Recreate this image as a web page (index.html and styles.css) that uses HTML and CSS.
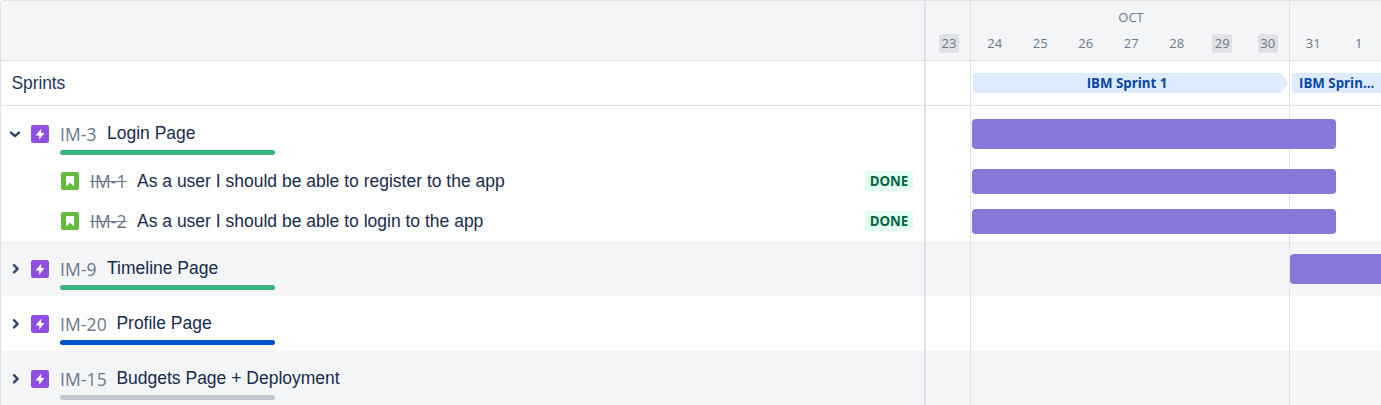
FILE: index.html
```html
<!DOCTYPE html>
<html lang="en">
<head>
<meta charset="utf-8">
<title>Roadmap</title>
<link rel="stylesheet" href="styles.css">
</head>
<body>
<svg class="defs" aria-hidden="true">
  <symbol id="epic" viewBox="0 0 18 18"><rect width="18" height="18" rx="2" fill="#904ee2"/><path d="M10.2 3.8v4.3h3.2L8.2 14.8v-4.4H4.6z" fill="#fff"/></symbol>
  <symbol id="story" viewBox="0 0 18 18"><rect width="18" height="18" rx="2" fill="#63ba3c"/><path d="M5.8 4h6.4a.8.8 0 0 1 .8.8v9.6L9 10.7 5 14.4V4.8a.8.8 0 0 1 .8-.8z" fill="#fff"/></symbol>
  <symbol id="right" viewBox="0 0 12 12"><path d="M5 2.2 8.6 5.8 5 9.4" fill="none" stroke="#344563" stroke-width="2.4" stroke-linecap="round" stroke-linejoin="round"/></symbol>
  <symbol id="down" viewBox="0 0 12 12"><path d="M2 4.6 6 8 10 4.6" fill="none" stroke="#344563" stroke-width="2.4" stroke-linecap="round" stroke-linejoin="round"/></symbol>
</svg>
<main class="roadmap">
  <section class="list">
    <div class="list-head"></div>
    <div class="sprints-label"><span>Sprints</span></div>
    <div class="row epic">
      <svg class="chevron"><use href="#down"/></svg><svg class="type"><use href="#epic"/></svg>
      <div class="summary"><div class="line"><span class="key">IM-3</span><span class="title">Login Page</span></div><div class="progress done"></div></div>
    </div>
    <div class="row child">
      <svg class="type"><use href="#story"/></svg><span class="key"><span class="struck">IM-1</span></span><span class="title">As a user I should be able to register to the app</span><span class="status">DONE</span>
    </div>
    <div class="row child">
      <svg class="type"><use href="#story"/></svg><span class="key"><span class="struck">IM-2</span></span><span class="title">As a user I should be able to login to the app</span><span class="status">DONE</span>
    </div>
    <div class="row epic shaded">
      <svg class="chevron"><use href="#right"/></svg><svg class="type"><use href="#epic"/></svg>
      <div class="summary"><div class="line"><span class="key">IM-9</span><span class="title">Timeline Page</span></div><div class="progress done"></div></div>
    </div>
    <div class="row epic">
      <svg class="chevron"><use href="#right"/></svg><svg class="type"><use href="#epic"/></svg>
      <div class="summary"><div class="line"><span class="key long">IM-20</span><span class="title">Profile Page</span></div><div class="progress active"></div></div>
    </div>
    <div class="row epic shaded">
      <svg class="chevron"><use href="#right"/></svg><svg class="type"><use href="#epic"/></svg>
      <div class="summary"><div class="line"><span class="key long">IM-15</span><span class="title">Budgets Page + Deployment</span></div><div class="progress todo"></div></div>
    </div>
  </section>
  <section class="timeline">
    <div class="time-head">
      <div class="month">OCT</div>
      <div class="days">
        <div class="day first"><span class="off">23</span></div>
        <div class="day"><span>24</span></div>
        <div class="day"><span>25</span></div>
        <div class="day"><span>26</span></div>
        <div class="day"><span>27</span></div>
        <div class="day"><span>28</span></div>
        <div class="day"><span class="off">29</span></div>
        <div class="day"><span class="off">30</span></div>
        <div class="day"><span>31</span></div>
        <div class="day"><span>1</span></div>
      </div>
    </div>
    <div class="sprint-track">
      <div class="sprint">IBM Sprint 1</div>
      <svg class="tip" viewBox="0 0 7 20"><path d="M.5 0 7 10 .5 20z" fill="#deebff"/></svg>
      <div class="sprint next">IBM Sprin...</div>
    </div>
    <div class="track epic"><div class="bar"></div></div>
    <div class="track child"><div class="bar"></div></div>
    <div class="track child"><div class="bar"></div></div>
    <div class="track epic shaded"><div class="bar later"></div></div>
    <div class="track epic"></div>
    <div class="track epic shaded"></div>
    <div class="gridline week-one"></div>
    <div class="gridline week-two"></div>
  </section>
</main>
</body>
</html>
```
FILE: styles.css
```css
* { box-sizing: border-box; }
body { margin: 0; background: #fff; overflow: hidden; font-family: "Open Sans", "Noto Sans", sans-serif; }
.defs { position: absolute; width: 0; height: 0; }
.roadmap { display: flex; width: 1381px; height: 405px; overflow: hidden; border: solid #dfe1e6; border-width: 1px 0 0 1px; border-top-left-radius: 4px; }
.list { width: 925px; flex: none; border-right: 2px solid #dfe1e6; }
.list-head, .time-head { height: 60px; background: #f4f5f7; border-bottom: 1px solid #dfe1e6; }
.sprints-label, .sprint-track { height: 45px; display: flex; align-items: center; border-bottom: 1px solid #dfe1e6; }
.sprints-label { padding-left: 10.5px; font: 17.5px/24px "Liberation Sans", sans-serif; letter-spacing: -0.1px; color: #253858; }
.row { display: flex; }
.epic { height: 55px; }
.child { height: 40px; }
.shaded { background: #f4f5f7; }
.row.epic { padding: 13px 0 0 8px; }
.row.child { padding: 0 11px 0 60px; align-items: center; }
.chevron { width: 12px; height: 12px; margin: 9px 10px 0 0; flex: none; }
.type { width: 18px; height: 18px; flex: none; }
.epic .type { margin-top: 6px; }
.summary { margin-left: 11px; }
.line { display: flex; height: 31px; }
.key { width: 47px; font-size: 17.5px; line-height: 30px; letter-spacing: 0.1px; color: #6b778c; white-space: nowrap; }
.key.long { width: 56.4px; }
.child .key { margin-left: 11px; }
.struck { text-decoration: line-through; }
.title { font: 17.5px/28px "Liberation Sans", sans-serif; color: #172b4d; white-space: nowrap; }
.progress { width: 215px; height: 5px; border-radius: 3px; }
.done { background: #36b37e; }
.active { background: #0052cc; }
.todo { background: #c1c7d0; }
.status { margin-left: auto; width: 48px; height: 20px; border-radius: 3px; background: #e3fcef; color: #006644; font: 700 13.3px/20px "Open Sans", sans-serif; letter-spacing: -0.1px; text-align: center; }
.timeline { position: relative; width: 455px; flex: none; overflow: hidden; }
.time-head { padding-top: 7px; color: #6b778c; font-size: 13px; }
.month { width: 410px; text-align: center; line-height: 18px; height: 26px; }
.days { display: flex; }
.day { flex: none; width: 45.5px; display: flex; justify-content: center; line-height: 19px; }
.day.first { width: 46px; }
.off { width: 20px; border-radius: 3px; background: #dfe1e6; text-align: center; }
.sprint { flex: none; width: 308px; height: 20px; margin-left: 47px; border-radius: 3px 0 0 3px; background: #deebff; color: #0747a6; font: 700 13.3px/20px "Open Sans", sans-serif; text-align: center; }
.tip { width: 7px; height: 20px; flex: none; }
.sprint.next { width: 100px; margin-left: 4px; padding-left: 7px; text-align: left; }
.track { padding-top: 13px; }
.track.child { padding-top: 8px; }
.bar { position: relative; z-index: 1; width: 363.5px; height: 29.5px; margin-left: 46px; border-radius: 4px; background: #8777d9; }
.child .bar { height: 24.5px; }
.bar.later { margin-left: 364.4px; }
.gridline { position: absolute; top: 0; bottom: 0; width: 1px; background: #dfe1e6; }
.week-one { left: 44px; }
.week-two { left: 363px; }
```
